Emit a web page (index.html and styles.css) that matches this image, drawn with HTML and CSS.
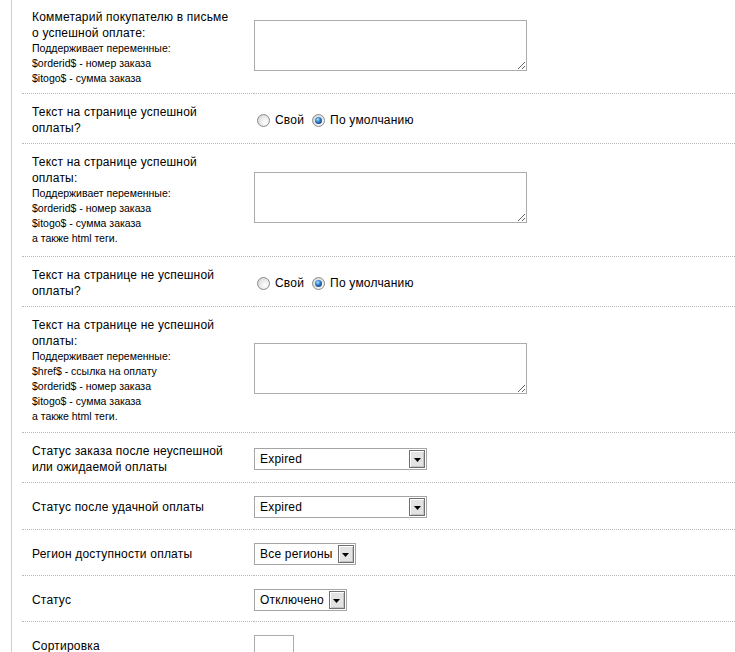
FILE: index.html
```html
<!DOCTYPE html>
<html lang="ru">
<head>
<meta charset="utf-8">
<title>Настройки оплаты</title>
<link rel="stylesheet" href="styles.css">
</head>
<body>
<div class="panel">
  <table class="form">
    <tr class="row-first">
      <td class="lbl">Комметарий покупателю в письме о успешной оплате:<div class="hint">Поддерживает переменные:<br>$orderid$ - номер заказа<br>$itogo$ - сумма заказа</div></td>
      <td class="ctl"><textarea class="area"></textarea></td>
    </tr>
    <tr>
      <td class="lbl">Текст на странице успешной оплаты?</td>
      <td class="ctl">
        <div class="radios">
          <span class="radio"></span><span class="rlabel">Свой</span>
          <span class="radio on"></span><span class="rlabel">По умолчанию</span>
        </div>
      </td>
    </tr>
    <tr class="row-tall">
      <td class="lbl">Текст на странице успешной оплаты:<div class="hint">Поддерживает переменные:<br>$orderid$ - номер заказа<br>$itogo$ - сумма заказа<br>а также html теги.</div></td>
      <td class="ctl"><textarea class="area"></textarea></td>
    </tr>
    <tr>
      <td class="lbl">Текст на странице не успешной оплаты?</td>
      <td class="ctl">
        <div class="radios">
          <span class="radio"></span><span class="rlabel">Свой</span>
          <span class="radio on"></span><span class="rlabel">По умолчанию</span>
        </div>
      </td>
    </tr>
    <tr class="row-plus">
      <td class="lbl">Текст на странице не успешной оплаты:<div class="hint">Поддерживает переменные:<br>$href$ - ссылка на оплату<br>$orderid$ - номер заказа<br>$itogo$ - сумма заказа<br>а также html теги.</div></td>
      <td class="ctl"><textarea class="area"></textarea></td>
    </tr>
    <tr>
      <td class="lbl">Статус заказа после неуспешной или ожидаемой оплаты</td>
      <td class="ctl"><div class="select wide"><span class="val">Expired</span><span class="btn"><svg width="7" height="4" viewBox="0 0 7 4"><polygon points="0,0 7,0 3.5,4" fill="#000"/></svg></span></div></td>
    </tr>
    <tr class="row-plus">
      <td class="lbl">Статус после удачной оплаты</td>
      <td class="ctl"><div class="select wide"><span class="val">Expired</span><span class="btn"><svg width="7" height="4" viewBox="0 0 7 4"><polygon points="0,0 7,0 3.5,4" fill="#000"/></svg></span></div></td>
    </tr>
    <tr>
      <td class="lbl">Регион доступности оплаты</td>
      <td class="ctl"><div class="select"><span class="val">Все регионы</span><span class="btn"><svg width="7" height="4" viewBox="0 0 7 4"><polygon points="0,0 7,0 3.5,4" fill="#000"/></svg></span></div></td>
    </tr>
    <tr>
      <td class="lbl">Статус</td>
      <td class="ctl"><div class="select"><span class="val">Отключено</span><span class="btn"><svg width="7" height="4" viewBox="0 0 7 4"><polygon points="0,0 7,0 3.5,4" fill="#000"/></svg></span></div></td>
    </tr>
    <tr>
      <td class="lbl">Сортировка</td>
      <td class="ctl"><input class="num" type="text"></td>
    </tr>
  </table>
</div>
</body>
</html>
```

FILE: styles.css
```css
html {
  overflow: hidden;
}

body {
  margin: 0;
  background: #fff;
  font-family: "Liberation Sans", Arial, sans-serif;
  font-size: 12px;
  letter-spacing: 0.2px;
  color: #000;
}

.panel {
  margin-left: 11px;
  border-left: 1px solid #cfcfcf;
  padding-left: 10px;
  min-height: 100vh;
}

.form {
  width: 100%;
  border-collapse: collapse;
}

.form td {
  border-bottom: 1px dotted #b8b8b8;
  padding: 10px 0 7px 0;
  vertical-align: middle;
}

.form .lbl {
  width: 200px;
  padding-left: 10px;
  padding-right: 22px;
  line-height: 16px;
}

.row-first td {
  padding-top: 9px;
}

.row-tall td {
  padding-bottom: 10px;
}

.row-plus td {
  padding-bottom: 8px;
}

.hint {
  font-size: 10.5px;
  letter-spacing: 0;
  line-height: 15px;
}

.area {
  display: block;
  box-sizing: border-box;
  width: 273px;
  height: 51px;
  margin: 0 0 5px 0;
  border: 1px solid #acacb0;
  padding: 2px;
  background: #fff;
}

.radios {
  display: flex;
  align-items: center;
}

.radio {
  box-sizing: border-box;
  width: 13px;
  height: 13px;
  margin: 0 5px 0 3px;
  border-radius: 50%;
  border: 1px solid #8c8c8c;
  background: radial-gradient(circle at 65% 65%, #ffffff 0, #f0f0f0 35%, #cccccc 100%);
  display: flex;
  align-items: center;
  justify-content: center;
}

.radio.on::after {
  content: "";
  width: 7px;
  height: 7px;
  border-radius: 50%;
  background: radial-gradient(circle at 40% 35%, #b4e4ff 0, #3b8ad6 35%, #12457e 75%, #0b2a50 100%);
}

.rlabel {
  margin-right: 5px;
}

.select {
  display: inline-flex;
  align-items: center;
  box-sizing: border-box;
  height: 22px;
  margin: 3px 0;
  border: 1px solid #a5a5a5;
  background: #fff;
  padding: 1px 1px 1px 5px;
  vertical-align: middle;
}

.select.wide {
  width: 173px;
}

.select .val {
  flex: 1;
  white-space: nowrap;
  padding-right: 5px;
}

.select .btn {
  box-sizing: border-box;
  width: 16px;
  height: 18px;
  border: 1px solid #707070;
  background: #e3e3e3;
  box-shadow: inset 1px 1px 0 #fff, inset -1px -1px 0 #c4c4c4;
  display: flex;
  align-items: center;
  justify-content: center;
  padding-top: 2px;
}

.select .btn svg {
  display: block;
}

.num {
  display: block;
  box-sizing: border-box;
  width: 40px;
  height: 22px;
  margin: 3px 0;
  border: 1px solid #acacb0;
  padding: 2px;
  font: inherit;
}
```
